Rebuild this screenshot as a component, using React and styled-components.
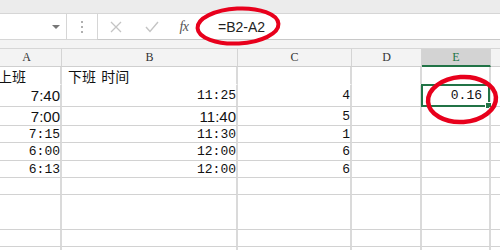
import React from "react";
import styled, { createGlobalStyle } from "styled-components";

const Global = createGlobalStyle`
  html, body { margin: 0; padding: 0; background: #fff; overflow: hidden; }
  #root { width: 500px; height: 250px; overflow: hidden; }
`;

const Page = styled.div`
  position: relative;
  width: 500px;
  height: 250px;
  overflow: hidden;
  display: flex;
  flex-direction: column;
  background: #fff;
  font-family: "Liberation Sans", Arial, sans-serif;
`;

const TopBand = styled.div`
  height: 13px;
  flex: none;
  background: #ececec;
  border-bottom: 1px solid #d6d6d6;
`;

const FormulaRow = styled.div`
  height: 26px;
  flex: none;
  display: flex;
  align-items: stretch;
  background: #fff;
`;

const NameBox = styled.div`
  width: 67px;
  box-sizing: border-box;
  border-right: 1px solid #d6d6d6;
  border-bottom: 1px solid #d6d6d6;
  display: flex;
  align-items: center;
  justify-content: flex-end;
  padding-right: 6px;
`;

const Caret = styled.div`
  width: 0;
  height: 0;
  border-left: 4px solid transparent;
  border-right: 4px solid transparent;
  border-top: 4px solid #777;
`;

const Grip = styled.div`
  width: 30px;
  display: flex;
  flex-direction: column;
  align-items: center;
  justify-content: center;
  gap: 3px;
  border-bottom: 1px solid #d6d6d6;
  box-sizing: border-box;
`;

const Dot = styled.span`
  width: 2px;
  height: 2px;
  background: #b0b0b0;
`;

const FormulaBox = styled.div`
  flex: 1;
  box-sizing: border-box;
  border-left: 1px solid #d6d6d6;
  border-bottom: 1px solid #c8c8c8;
  display: flex;
  align-items: center;
`;

const ToolIcon = styled.div`
  width: ${(p) => p.w}px;
  display: flex;
  align-items: center;
  justify-content: center;
  flex: none;
`;

const Fx = styled.span`
  font-family: "Liberation Serif", "DejaVu Serif", serif;
  font-style: italic;
  font-size: 14px;
  color: #555;
  letter-spacing: -0.5px;
`;

const FormulaText = styled.span`
  margin-left: 20px;
  font-family: "Liberation Sans", Arial, sans-serif;
  font-size: 14px;
  color: #222;
`;

const GapStrip = styled.div`
  height: 8px;
  flex: none;
  background: #f3f3f3;
`;

const COLS = "70px 176px 114px 70px 69px 60px";

const Sheet = styled.div`
  margin-left: -8px;
  display: grid;
  grid-template-columns: ${COLS};
`;

const HeadCell = styled.div`
  height: 19px;
  box-sizing: border-box;
  background: ${(p) => (p.active ? "#d3d3d3" : "#f3f3f3")};
  border-top: 1px solid #d6d6d6;
  border-right: 1px solid #d4d4d4;
  border-bottom: ${(p) => (p.active ? "2px solid #217346" : "1px solid #cfcfcf")};
  display: flex;
  align-items: center;
  justify-content: center;
  font-family: "Liberation Serif", "DejaVu Serif", serif;
  font-size: 12px;
  color: ${(p) => (p.active ? "#217346" : "#333")};
`;

const Cell = styled.div`
  position: relative;
  height: ${(p) => p.h}px;
  box-sizing: border-box;
  border-right: 2px solid #dadada;
  border-bottom: 1px solid ${(p) => (p.nogrid ? "transparent" : "#d2d2d2")};
  display: flex;
  align-items: center;
  justify-content: ${(p) => (p.right ? "flex-end" : "flex-start")};
  padding: 0 ${(p) => (p.right ? "0" : "4px")} 0 ${(p) => (p.right ? "0" : "6px")};
  white-space: nowrap;
  overflow: visible;
  color: #111;
  font-family: ${(p) =>
    p.kind === "cjk"
      ? '"Noto Sans CJK SC", "Noto Sans", sans-serif'
      : p.kind === "sans"
      ? '"Liberation Sans", Arial, sans-serif'
      : '"Liberation Mono", "DejaVu Sans Mono", monospace'};
  font-size: ${(p) => (p.kind === "cjk" ? "14px" : p.kind === "sans" ? "15px" : "13px")};
  word-spacing: ${(p) => (p.kind === "cjk" ? "2px" : "0")};
`;

const Selection = styled.div`
  position: absolute;
  left: -1px;
  top: -1px;
  right: -1px;
  bottom: -1px;
  border: 2px solid #217346;
  pointer-events: none;
`;

const FillHandle = styled.div`
  position: absolute;
  right: -4px;
  bottom: -4px;
  width: 5px;
  height: 5px;
  background: #217346;
  border: 1px solid #fff;
`;

const CellValue = styled.span`
  position: relative;
  z-index: 1;
  padding-right: ${(p) => p.pr || 0}px;
`;

const Overlay = styled.svg`
  position: absolute;
  left: 0;
  top: 0;
  width: 500px;
  height: 250px;
  pointer-events: none;
`;

const rows = [
  { h: 18, nogrid: true, cells: [{ v: "上班", kind: "cjk" }, { v: "下班 时间", kind: "cjk" }, {}, {}, {}, {}] },
  {
    h: 22,
    cells: [
      { v: "7:40", kind: "sans", right: true },
      { v: "11:25", right: true },
      { v: "4", right: true },
      {},
      { v: "0.16", right: true, selected: true },
      {},
    ],
  },
  { h: 19, cells: [{ v: "7:00", kind: "sans", right: true }, { v: "11:40", kind: "sans", right: true }, { v: "5", right: true }, {}, {}, {}] },
  { h: 17, cells: [{ v: "7:15", right: true }, { v: "11:30", right: true }, { v: "1", right: true }, {}, {}, {}] },
  { h: 18, cells: [{ v: "6:00", right: true }, { v: "12:00", right: true }, { v: "6", right: true }, {}, {}, {}] },
  { h: 17, cells: [{ v: "6:13", right: true }, { v: "12:00", right: true }, { v: "6", right: true }, {}, {}, {}] },
  { h: 17, cells: [{}, {}, {}, {}, {}, {}] },
  { h: 35, cells: [{}, {}, {}, {}, {}, {}] },
  { h: 17, cells: [{}, {}, {}, {}, {}, {}] },
  { h: 17, cells: [{}, {}, {}, {}, {}, {}] },
];

const heads = ["A", "B", "C", "D", "E", ""];

export default function App() {
  return (
    <>
      <Global />
      <Page>
        <TopBand />
        <FormulaRow>
          <NameBox>
            <Caret />
          </NameBox>
          <Grip>
            <Dot />
            <Dot />
            <Dot />
          </Grip>
          <FormulaBox>
            <ToolIcon w={36}>
              <svg width="12" height="12" viewBox="0 0 12 12">
                <path d="M1 1 L11 11 M11 1 L1 11" stroke="#c4c4c4" strokeWidth="1.3" fill="none" />
              </svg>
            </ToolIcon>
            <ToolIcon w={36}>
              <svg width="14" height="12" viewBox="0 0 14 12">
                <path d="M1 6 L5 10.5 L13 1" stroke="#c4c4c4" strokeWidth="1.4" fill="none" />
              </svg>
            </ToolIcon>
            <ToolIcon w={28}>
              <Fx>fx</Fx>
            </ToolIcon>
            <FormulaText>=B2-A2</FormulaText>
          </FormulaBox>
        </FormulaRow>
        <GapStrip />
        <Sheet>
          {heads.map((h, i) => (
            <HeadCell key={"h" + i} active={h === "E"}>
              {h}
            </HeadCell>
          ))}
          {rows.map((r, ri) =>
            r.cells.map((c, ci) => (
              <Cell key={ri + "-" + ci} h={r.h} nogrid={r.nogrid} right={c.right} kind={c.kind}>
                {c.v && <CellValue pr={c.selected ? 7 : 0}>{c.v}</CellValue>}
                {c.selected && (
                  <Selection>
                    <FillHandle />
                  </Selection>
                )}
              </Cell>
            ))
          )}
        </Sheet>
        <Overlay viewBox="0 0 500 250">
          <ellipse cx="238" cy="26" rx="40.5" ry="17.5" fill="none" stroke="#e8001c" strokeWidth="4" transform="rotate(-3 238 26)" />
          <ellipse cx="462" cy="99.5" rx="34" ry="22.5" fill="none" stroke="#e8001c" strokeWidth="4.5" transform="rotate(-4 462 99.5)" />
        </Overlay>
      </Page>
    </>
  );
}
